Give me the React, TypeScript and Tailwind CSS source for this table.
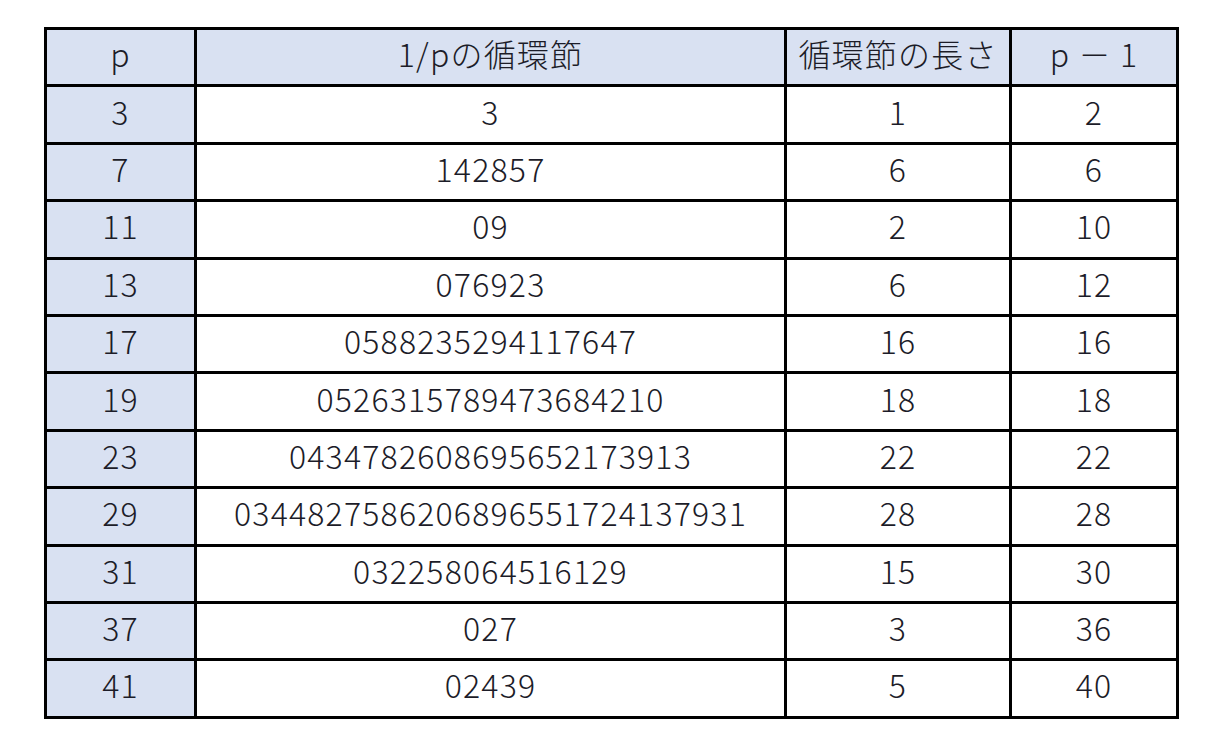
const rows: [string, string, string, string][] = [
  ["3", "3", "1", "2"],
  ["7", "142857", "6", "6"],
  ["11", "09", "2", "10"],
  ["13", "076923", "6", "12"],
  ["17", "0588235294117647", "16", "16"],
  ["19", "0526315789473684210", "18", "18"],
  ["23", "0434782608695652173913", "22", "22"],
  ["29", "0344827586206896551724137931", "28", "28"],
  ["31", "032258064516129", "15", "30"],
  ["37", "027", "3", "36"],
  ["41", "02439", "5", "40"],
];

const cell = "border-[3px] border-black text-center align-middle pt-0 pb-[8px] px-0 h-[57.4px]";

export default function App() {
  return (
    <div
      className="w-[1229px] h-[748px] bg-white pt-[27px] pl-[44px] text-[#1c1c28] font-light"
      style={{ fontFamily: '"Noto Sans CJK JP", "Noto Sans", sans-serif' }}
    >
      <table className="border-collapse text-[32px] leading-none tracking-[1.2px]">
        <colgroup>
          <col className="w-[150px]" />
          <col className="w-[590px]" />
          <col className="w-[225px]" />
          <col className="w-[167px]" />
        </colgroup>
        <thead>
          <tr className="bg-[#d9e1f2]">
            <th className={`${cell} font-light`}>p</th>
            <th className={`${cell} font-light`}>1/pの循環節</th>
            <th className={`${cell} font-light`}>循環節の長さ</th>
            <th className={`${cell} font-light`}>p － 1</th>
          </tr>
        </thead>
        <tbody>
          {rows.map((r) => (
            <tr key={r[0]}>
              <td className={`${cell} bg-[#d9e1f2]`}>{r[0]}</td>
              <td className={cell}>{r[1]}</td>
              <td className={cell}>{r[2]}</td>
              <td className={cell}>{r[3]}</td>
            </tr>
          ))}
        </tbody>
      </table>
    </div>
  );
}
